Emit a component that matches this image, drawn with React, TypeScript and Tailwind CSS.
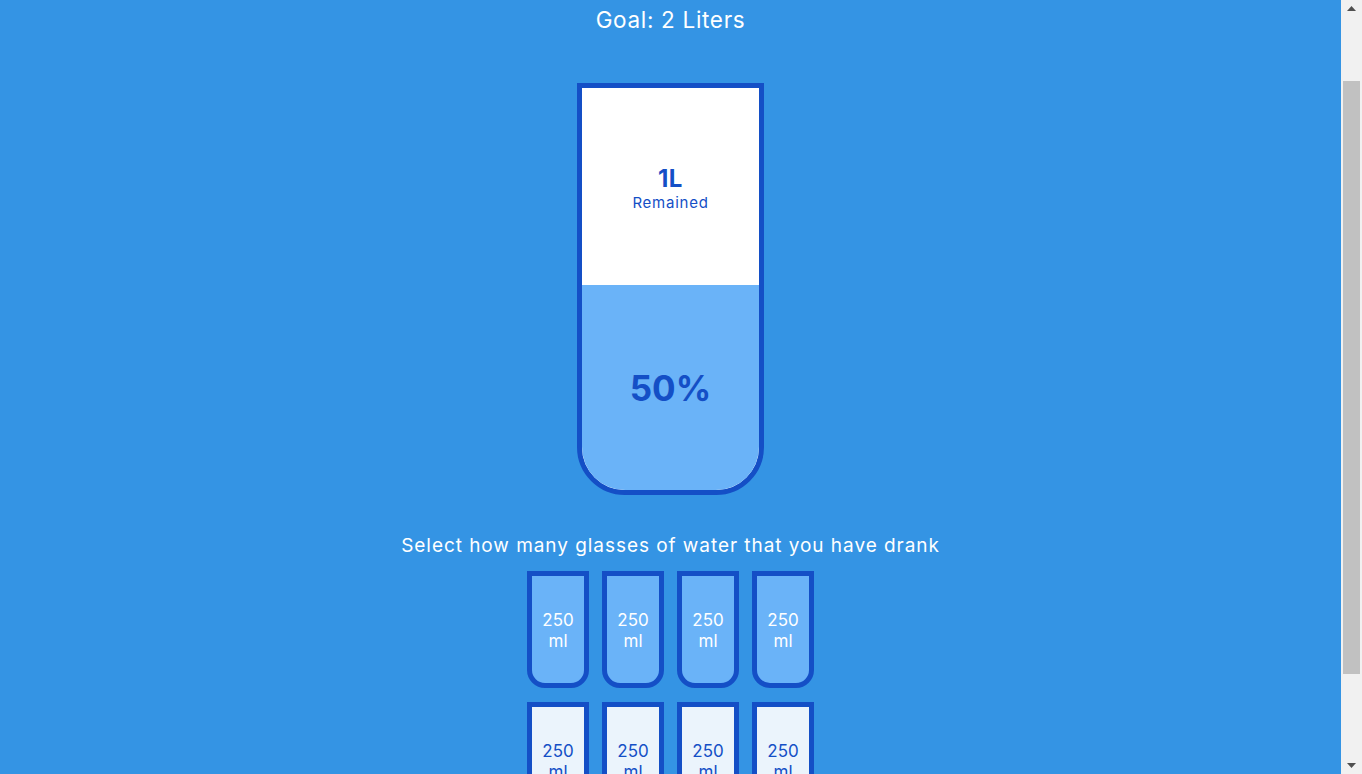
import React from "react";

const cups = [true, true, true, true, false, false, false, false];

function Scrollbar() {
  return (
    <div className="w-[21px] h-full bg-[#f1f1f1] flex flex-col items-center shrink-0">
      <div className="h-[17px] w-full flex items-center justify-center">
        <svg width="9" height="5" viewBox="0 0 9 5">
          <polygon points="4.5,0 9,5 0,5" fill="#505050" />
        </svg>
      </div>
      <div className="h-[64px]" />
      <div className="w-[17px] h-[593px] bg-[#c1c1c1]" />
      <div className="flex-1" />
      <div className="h-[17px] w-full flex items-center justify-center">
        <svg width="9" height="5" viewBox="0 0 9 5">
          <polygon points="0,0 9,0 4.5,5" fill="#505050" />
        </svg>
      </div>
    </div>
  );
}

export default function App() {
  return (
    <div
      className="h-screen w-full flex overflow-hidden bg-[#3494e4] text-white"
      style={{ fontFamily: "Inter, 'Open Sans', sans-serif" }}
    >
      <div className="flex-1 flex flex-col items-center overflow-hidden pt-[6px]">
        <h3 className="text-[22.5px] leading-[28px] font-normal tracking-[0.03em] m-0">
          Goal: 2 Liters
        </h3>

        <div className="mt-[49px] w-[187px] h-[412px] shrink-0 border-[5px] border-[#144fc6] rounded-b-[48px] overflow-hidden bg-white flex flex-col text-[#144fc6]">
          <div className="flex-1 flex flex-col items-center justify-center pt-[5px]">
            <span className="text-[24px] leading-[26px] font-bold tracking-[0.02em]">1L</span>
            <small className="text-[15px] leading-[21px] tracking-[0.05em]">Remained</small>
          </div>
          <div className="h-[205px] bg-[#6ab3f8] flex items-center justify-center">
            <span className="text-[35px] font-bold leading-[40px]">50%</span>
          </div>
        </div>

        <p className="mt-[39px] text-[19px] leading-[24px] tracking-[0.05em] m-0">
          Select how many glasses of water that you have drank
        </p>

        <div className="mt-[13px] grid grid-cols-4 gap-x-[13px] gap-y-[14px] shrink-0">
          {cups.map((full, i) => (
            <div
              key={i}
              className={
                full
                  ? "w-[62px] h-[117px] border-[5px] border-[#144fc6] rounded-b-[18px] bg-[#6ab3f8] text-white flex items-center justify-center text-center text-[17px] leading-[21px] pt-[3px]"
                  : "w-[62px] h-[117px] border-[5px] border-[#144fc6] rounded-b-[18px] bg-[#ebf4fc] text-[#144fc6] flex items-center justify-center text-center text-[17px] leading-[21px] pt-[3px]"
              }
            >
              250
              <br />
              ml
            </div>
          ))}
        </div>
      </div>
      <Scrollbar />
    </div>
  );
}
